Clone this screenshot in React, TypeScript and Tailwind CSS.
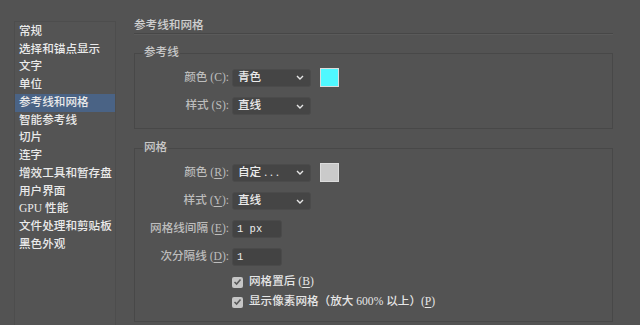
import { ReactNode } from 'react';

const FONT = "font-['Liberation_Serif','Noto_Sans_CJK_SC',serif]";

const sections = [
  '常规',
  '选择和锚点显示',
  '文字',
  '单位',
  '参考线和网格',
  '智能参考线',
  '切片',
  '连字',
  '增效工具和暂存盘',
  '用户界面',
  'GPU 性能',
  '文件处理和剪贴板',
  '黑色外观',
];

function Chevron() {
  return (
    <svg width="8" height="5" viewBox="0 0 8 5" className="shrink-0">
      <path d="M1 1 L4 4 L7 1" fill="none" stroke="#e6e6e6" strokeWidth="1.4" />
    </svg>
  );
}

function Label({ text, hint, underline }: { text: string; hint: string; underline?: boolean }) {
  return (
    <div className="w-[89px] shrink-0 text-right text-[#bdbdbd] pr-[3px] whitespace-nowrap">
      {text} (<span className={underline ? 'underline underline-offset-2' : ''}>{hint}</span>):
    </div>
  );
}

function Select({ children }: { children: ReactNode }) {
  return (
    <div className="w-[79px] h-[18px] flex items-center justify-between pl-[5px] pr-[6px] bg-[#454545] border border-[#4b4b4b] rounded-[3px] text-[#ececec]">
      <span>{children}</span>
      <Chevron />
    </div>
  );
}

function Swatch({ color }: { color: string }) {
  return <div className={`w-[19px] h-[19px] ml-[9px] border border-[#dcdcdc] ${color}`} />;
}

function Input({ value }: { value: string }) {
  return (
    <div className="w-[50px] h-[18px] flex items-center pl-[4px] bg-[#434343] border border-[#4a4a4a] rounded-[3px] text-[#ececec] font-['Liberation_Mono',monospace] text-[10.5px]">
      {value}
    </div>
  );
}

function Check({ children }: { children: ReactNode }) {
  return (
    <div className="h-[16px] flex items-center pl-[89px]">
      <div className="w-[11px] h-[11px] rounded-[2px] bg-[#c6c6c6] flex items-center justify-center">
        <svg width="9" height="8" viewBox="0 0 9 8">
          <path d="M1.5 4 L3.6 6 L7.5 1.5" fill="none" stroke="#5a5a5a" strokeWidth="1.6" />
        </svg>
      </div>
      <span className="ml-[6px] text-[#e6e6e6]">{children}</span>
    </div>
  );
}

function Group({ title, children, className }: { title: string; children: ReactNode; className?: string }) {
  return (
    <fieldset className={`border border-[#484848] pl-[8px] ${className ?? ''}`}>
      <legend className="px-[1px] leading-[14px] text-[#c8c8c8]">{title}</legend>
      {children}
    </fieldset>
  );
}

export default function App() {
  return (
    <div className={`w-[640px] h-[325px] bg-[#535353] flex overflow-hidden text-[11.6px] leading-[14px] font-medium ${FONT}`}>
      <div className="ml-[14px] mt-[21px] w-[102px] h-[320px] bg-[#545454] border border-[#4d4d4d] pt-[1px] shrink-0">
        {sections.map((s) => (
          <div
            key={s}
            className={`h-[17.75px] flex items-center pl-[4px] text-[#eaeaea] whitespace-nowrap ${
              s === '参考线和网格' ? 'bg-[#4a6385]' : ''
            }`}
          >
            {s}
          </div>
        ))}
      </div>

      <div className="ml-[18px] w-[479px] pt-[19px] shrink-0">
        <div className="h-[14px] text-[#d0d0d0] border-b border-[#474747] shadow-[0_1px_0_#5a5a5a] box-content">
          参考线和网格
        </div>

        <Group title="参考线" className="mt-[12px] pt-[8px] pb-[13px]">
          <div className="flex flex-col gap-[10px]">
            <div className="flex items-center">
              <Label text="颜色" hint="C" />
              <Select>青色</Select>
              <Swatch color="bg-[#4ff8ff]" />
            </div>
            <div className="flex items-center h-[18px]">
              <Label text="样式" hint="S" />
              <Select>直线</Select>
            </div>
          </div>
        </Group>

        <Group title="网格" className="mt-[12px] pt-[8px] pb-[11px]">
          <div className="flex flex-col gap-[10px]">
            <div className="flex items-center">
              <Label text="颜色" hint="R" underline />
              <Select>
                自定<span className="tracking-[3px] ml-[3px]">...</span>
              </Select>
              <Swatch color="bg-[#cacaca]" />
            </div>
            <div className="flex items-center h-[18px]">
              <Label text="样式" hint="Y" underline />
              <Select>直线</Select>
            </div>
            <div className="flex items-center h-[18px]">
              <Label text="网格线间隔" hint="E" underline />
              <Input value="1 px" />
            </div>
            <div className="flex items-center h-[18px]">
              <Label text="次分隔线" hint="D" underline />
              <Input value="1" />
            </div>
          </div>
          <div className="mt-[8px] flex flex-col gap-[4px]">
            <Check>
              网格置后 (<span className="underline underline-offset-2">B</span>)
            </Check>
            <Check>
              显示像素网格（放大 600% 以上）(<span className="underline underline-offset-2">P</span>)
            </Check>
          </div>
        </Group>
      </div>
    </div>
  );
}
